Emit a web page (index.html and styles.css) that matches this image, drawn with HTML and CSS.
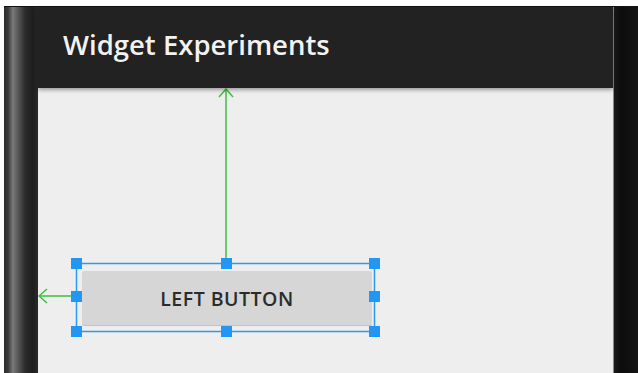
FILE: index.html
```html
<!DOCTYPE html>
<html lang="en">
<head>
    <meta charset="UTF-8">
    <meta name="viewport" content="width=device-width, initial-scale=1.0">
    <title>Widget Experiments</title>
    <link rel="stylesheet" href="styles.css">
</head>
<body>
    <div class="device">
        <div class="bezel-left"></div>
        <div class="screen">
            <div class="action-bar">
                <h1 class="title">Widget Experiments</h1>
            </div>
            <div class="content">
                <button class="left-button">LEFT BUTTON</button>

                <!-- layout editor overlay: constraints + selection -->
                <svg class="overlay" width="575" height="285" viewBox="0 0 575 285">
                    <g stroke="#3dbf3d" stroke-width="1.5" fill="none">
                        <line x1="188" y1="1" x2="188" y2="175"/>
                        <polyline points="181,9 188,1 195,9"/>
                        <line x1="1" y1="208" x2="38" y2="208"/>
                        <polyline points="9,201 1,208 9,215"/>
                    </g>
                    <rect x="38.5" y="175.5" width="298" height="68" fill="none" stroke="#2a9bf2" stroke-width="1.5"/>
                    <g fill="#2196f3">
                        <rect x="33" y="170" width="11" height="11"/>
                        <rect x="183" y="170" width="11" height="11"/>
                        <rect x="331" y="170" width="11" height="11"/>
                        <rect x="33" y="203" width="11" height="11"/>
                        <rect x="331" y="203" width="11" height="11"/>
                        <rect x="33" y="238" width="11" height="11"/>
                        <rect x="183" y="238" width="11" height="11"/>
                        <rect x="331" y="238" width="11" height="11"/>
                    </g>
                </svg>
            </div>
        </div>
        <div class="bezel-right"></div>
    </div>
</body>
</html>
```

FILE: styles.css
```css
body {
    background-color: #fff;
    margin: 0;
    padding: 6px 0 0 4px;
    height: 373px;
    box-sizing: border-box;
    overflow: hidden;
    font-family: 'Open Sans', 'Noto Sans', sans-serif;
}

.device {
    display: flex;
    height: 367px;
    border-top: 1px solid #111;
    box-sizing: border-box;
}

/* phone frame edges */
.bezel-left {
    width: 34px;
    background: linear-gradient(to right, #2a2a2a 0%, #3a3a3a 12%, #7a7a7a 26%, #5a5a5a 40%, #2c2c2c 62%, #1e1e1e 85%, #2a2a2a 100%);
}

.bezel-right {
    flex: 1;
    background: linear-gradient(to right, #1a1a1a 0%, #0c0c0c 30%, #141414 100%);
    border-left: 1px solid #8a8a8a;
}

.screen {
    width: 575px;
    display: flex;
    flex-direction: column;
    background-color: #eeeeee;
}

.action-bar {
    height: 81px;
    background-color: #222;
    display: flex;
    align-items: flex-start;
    padding-left: 25px;
    box-sizing: border-box;
    box-shadow: 0 2px 4px rgba(0, 0, 0, 0.35);
    position: relative;
    z-index: 1;
}

.title {
    margin: 23px 0 0;
    color: #f2f2f2;
    font-size: 27.5px;
    font-weight: 600;
    line-height: 30px;
}

.content {
    flex: 1;
    position: relative;
    padding: 183px 0 0 44px;
}

.left-button {
    width: 290px;
    height: 55px;
    background-color: #d6d6d6;
    border: none;
    border-bottom: 1px solid #c2c2c2;
    border-radius: 2px;
    color: #2b2b2b;
    font-family: 'Open Sans', 'Noto Sans', sans-serif;
    font-size: 19.5px;
    font-weight: 600;
    letter-spacing: 0.5px;
    padding: 0;
    display: block;
}

.overlay {
    position: absolute;
    left: 0;
    top: 0;
}
```
